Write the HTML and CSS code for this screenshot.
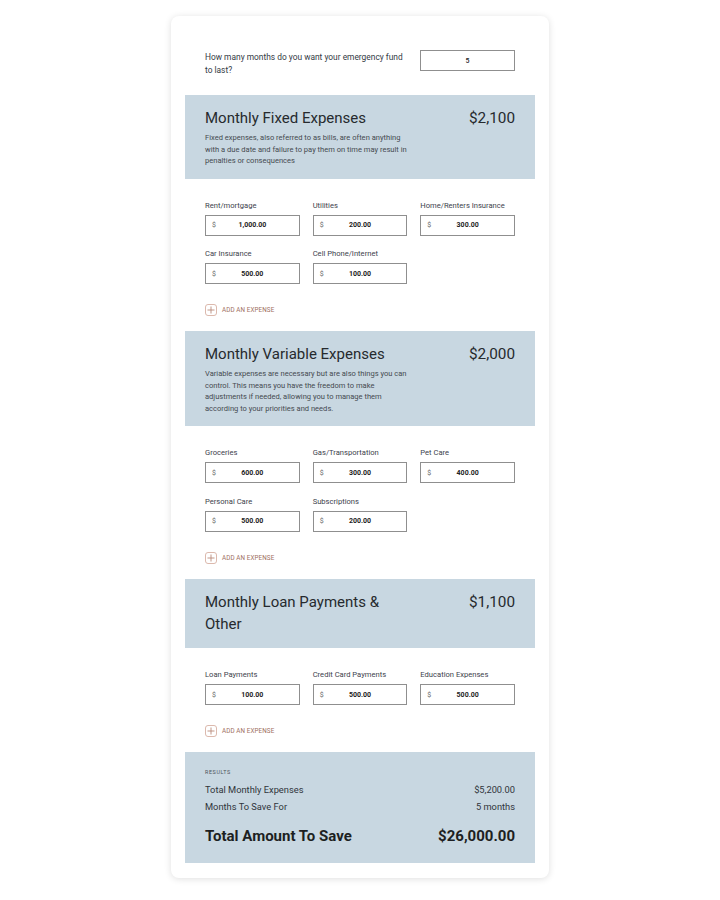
FILE: index.html
```html
<!DOCTYPE html>
<html lang="en">
<head>
<meta charset="utf-8">
<title>Emergency Fund Calculator</title>
<link rel="stylesheet" href="styles.css">
</head>
<body>
<div class="card">
  <div class="question">
    <p class="question-text">How many months do you want your emergency fund to last?</p>
    <div class="box months">5</div>
  </div>

  <section class="group">
    <div class="head">
      <div class="head-main">
        <h2 class="title">Monthly Fixed Expenses</h2>
        <p class="desc">Fixed expenses, also referred to as bills, are often anything with a due date and failure to pay them on time may result in penalties or consequences</p>
      </div>
      <div class="sum">$2,100</div>
    </div>
    <div class="fields">
      <div class="field"><label>Rent/mortgage</label><div class="box"><span class="cur">$</span><span class="val">1,000.00</span></div></div>
      <div class="field"><label>Utilities</label><div class="box"><span class="cur">$</span><span class="val">200.00</span></div></div>
      <div class="field"><label>Home/Renters Insurance</label><div class="box"><span class="cur">$</span><span class="val">300.00</span></div></div>
      <div class="field"><label>Car Insurance</label><div class="box"><span class="cur">$</span><span class="val">500.00</span></div></div>
      <div class="field"><label>Cell Phone/Internet</label><div class="box"><span class="cur">$</span><span class="val">100.00</span></div></div>
    </div>
    <div class="add"><span class="plus"><svg width="8" height="8" viewBox="0 0 8 8"><path d="M4 0.5V7.5M0.5 4H7.5" stroke="#b98b7b" stroke-width="0.9" fill="none"/></svg></span>ADD AN EXPENSE</div>
  </section>

  <section class="group">
    <div class="head">
      <div class="head-main">
        <h2 class="title">Monthly Variable Expenses</h2>
        <p class="desc">Variable expenses are necessary but are also things you can control. This means you have the freedom to make adjustments if needed, allowing you to manage them according to your priorities and needs.</p>
      </div>
      <div class="sum">$2,000</div>
    </div>
    <div class="fields">
      <div class="field"><label>Groceries</label><div class="box"><span class="cur">$</span><span class="val">600.00</span></div></div>
      <div class="field"><label>Gas/Transportation</label><div class="box"><span class="cur">$</span><span class="val">300.00</span></div></div>
      <div class="field"><label>Pet Care</label><div class="box"><span class="cur">$</span><span class="val">400.00</span></div></div>
      <div class="field"><label>Personal Care</label><div class="box"><span class="cur">$</span><span class="val">500.00</span></div></div>
      <div class="field"><label>Subscriptions</label><div class="box"><span class="cur">$</span><span class="val">200.00</span></div></div>
    </div>
    <div class="add"><span class="plus"><svg width="8" height="8" viewBox="0 0 8 8"><path d="M4 0.5V7.5M0.5 4H7.5" stroke="#b98b7b" stroke-width="0.9" fill="none"/></svg></span>ADD AN EXPENSE</div>
  </section>

  <section class="group">
    <div class="head head-short">
      <div class="head-main">
        <h2 class="title">Monthly Loan Payments &amp; Other</h2>
      </div>
      <div class="sum">$1,100</div>
    </div>
    <div class="fields">
      <div class="field"><label>Loan Payments</label><div class="box"><span class="cur">$</span><span class="val">100.00</span></div></div>
      <div class="field"><label>Credit Card Payments</label><div class="box"><span class="cur">$</span><span class="val">500.00</span></div></div>
      <div class="field"><label>Education Expenses</label><div class="box"><span class="cur">$</span><span class="val">500.00</span></div></div>
    </div>
    <div class="add"><span class="plus"><svg width="8" height="8" viewBox="0 0 8 8"><path d="M4 0.5V7.5M0.5 4H7.5" stroke="#b98b7b" stroke-width="0.9" fill="none"/></svg></span>ADD AN EXPENSE</div>
  </section>

  <section class="results">
    <div class="results-label">RESULTS</div>
    <div class="row"><span>Total Monthly Expenses</span><span>$5,200.00</span></div>
    <div class="row"><span>Months To Save For</span><span>5 months</span></div>
    <div class="row total"><span>Total Amount To Save</span><span>$26,000.00</span></div>
  </section>
</div>
</body>
</html>
```

FILE: styles.css
```css
* { box-sizing: border-box; }
html, body { margin: 0; padding: 0; background: #ffffff; }
body { font-family: Roboto, "Noto Sans", "Liberation Sans", sans-serif; color: #2d2d2d; }

.card {
  width: 378px;
  margin: 16px auto 20px;
  background: #fff;
  border-radius: 8px;
  box-shadow: 0 1px 7px rgba(0, 0, 0, 0.13);
  padding: 34px 14px 15px;
}

.question {
  display: flex;
  justify-content: space-between;
  align-items: flex-start;
  padding: 0 20px;
  margin-bottom: 18px;
}
.question-text {
  margin: 1px 0 0;
  width: 205px;
  font-size: 8.4px;
  line-height: 13px;
  color: #333a45;
}

.box {
  position: relative;
  height: 21px;
  border: 1px solid #8f8f8f;
  background: #fff;
  display: flex;
  align-items: center;
  justify-content: center;
  font-size: 7px;
  font-weight: 700;
  color: #222;
}
.months { width: 95px; font-weight: 500; }
.cur {
  position: absolute;
  left: 6px;
  top: 50%;
  transform: translateY(-50%);
  font-weight: 400;
  color: #666;
}

.head {
  background: #c8d7e1;
  display: flex;
  justify-content: space-between;
  align-items: flex-start;
  padding: 12px 20px;
}
.head-short { padding: 12.5px 20px 13px; }
.head-main { width: 206px; }
.title {
  margin: 0;
  font-size: 15px;
  line-height: 22px;
  font-weight: 400;
  color: #262a2e;
}
.desc {
  margin: 3px 0 0;
  font-size: 7.55px;
  line-height: 11.5px;
  color: #454a50;
}
.sum {
  font-size: 15.3px;
  line-height: 22px;
  color: #262a2e;
}

.fields {
  display: grid;
  grid-template-columns: repeat(3, 1fr);
  gap: 13.5px 13px;
  padding: 22px 20px 0;
}
.field label {
  display: block;
  font-size: 7.6px;
  line-height: 10px;
  margin-bottom: 4px;
  color: #3d424c;
}

.add {
  display: flex;
  align-items: center;
  gap: 5px;
  margin: 20px 20px 15px;
  font-size: 6.3px;
  letter-spacing: 0.1px;
  color: #a0705f;
  height: 12px;
}
.plus {
  width: 12px;
  height: 12px;
  border: 1px solid #dcb9ad;
  border-radius: 3px;
  display: flex;
  align-items: center;
  justify-content: center;
}

.results {
  background: #c8d7e1;
  margin-top: 5.5px;
  padding: 15.5px 20px 17px;
}
.results-label {
  font-size: 5.4px;
  line-height: 8px;
  letter-spacing: 0.6px;
  color: #4d535a;
  margin-bottom: 5.5px;
}
.row {
  display: flex;
  justify-content: space-between;
  font-size: 9.3px;
  line-height: 17px;
  color: #30353b;
}
.row.total {
  margin-top: 10.5px;
  font-size: 15px;
  line-height: 20px;
  font-weight: 700;
  color: #1d1f22;
}
```
